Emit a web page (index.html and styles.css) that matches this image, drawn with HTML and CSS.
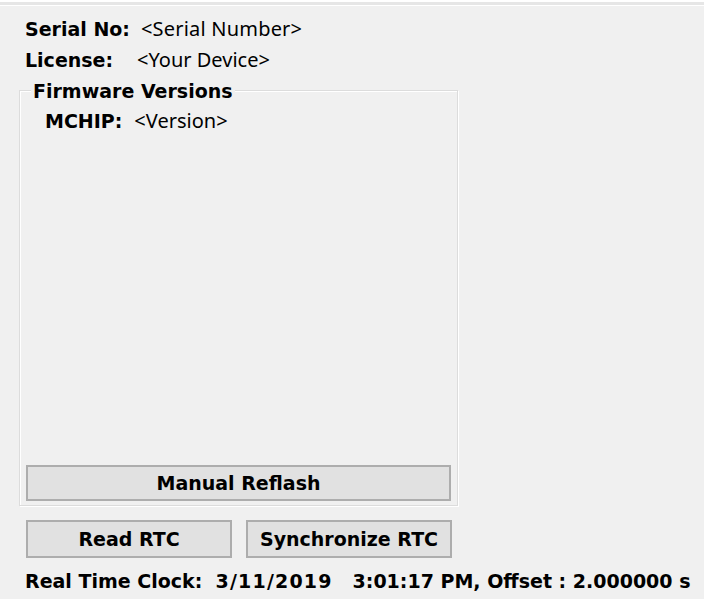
FILE: index.html
```html
<!DOCTYPE html>
<html>
<head>
<meta charset="utf-8">
<link rel="stylesheet" href="styles.css">
</head>
<body>
<div class="window">
  <div class="topbar"></div>
  <div class="content">
    <div class="row"><span class="label">Serial No:</span><span class="value serial">&lt;Serial Number&gt;</span></div>
    <div class="row"><span class="label">License:</span><span class="value license">&lt;Your Device&gt;</span></div>
    <div class="group">
      <div class="group-title">Firmware Versions</div>
      <div class="row sub"><span class="label">MCHIP:</span><span class="value mchip">&lt;Version&gt;</span></div>
      <div class="spacer"></div>
      <div class="btn wide">Manual Reflash</div>
    </div>
    <div class="btnrow">
      <div class="btn half">Read RTC</div>
      <div class="btn half">Synchronize RTC</div>
    </div>
    <div class="status">Real Time Clock:&nbsp; <span class="date">3/11/2019</span> &nbsp; 3:01:17 PM, Offset : 2.000000 s</div>
  </div>
</div>
</body>
</html>
```
FILE: styles.css
```css
html, body {
  margin: 0;
  padding: 0;
  background: #f0f0f0;
}
.window {
  width: 704px;
  height: 599px;
  display: flex;
  flex-direction: column;
}
.topbar {
  height: 3px;
  border-top: 2px solid #ffffff;
  border-bottom: 1px solid #ffffff;
  background: #e6e6e6;
}
.content {
  padding: 7px 0 0 25px;
  font-family: "DejaVu Sans", sans-serif;
  font-size: 19px;
  color: #000;
  display: flex;
  flex-direction: column;
}
.row {
  height: 31px;
  display: flex;
  align-items: center;
}
.label {
  font-weight: bold;
}
.value {
  font-family: "Noto Sans", "DejaVu Sans", sans-serif;
  font-size: 20px;
}
.serial { margin-left: 11px; letter-spacing: 0.2px; }
.license { margin-left: 24px; }
.mchip { margin-left: 12px; }
.group {
  box-sizing: border-box;
  margin-left: -6px;
  margin-top: 15px;
  width: 439px;
  height: 416px;
  border: 1px solid #dcdcdc;
  box-shadow: inset 1px 1px 0 #ffffff, 1px 1px 0 #ffffff;
  display: flex;
  flex-direction: column;
  padding: 0 6px 4px 6px;
}
.group-title {
  align-self: flex-start;
  margin-top: -11px;
  margin-left: 5px;
  padding: 0 2px;
  background: #f0f0f0;
  font-weight: bold;
  line-height: 22px;
}
.sub {
  margin-left: 19px;
  margin-top: 3px;
}
.spacer { flex: 1; }
.btn {
  box-sizing: border-box;
  background: #e1e1e1;
  border: 2px solid #adadad;
  font-weight: bold;
  display: flex;
  align-items: center;
  justify-content: center;
}
.wide {
  height: 36px;
}
.btnrow {
  display: flex;
  gap: 14px;
  margin-top: 14px;
  margin-left: 1px;
}
.half {
  width: 206px;
  height: 38px;
}
.status {
  font-weight: bold;
  margin-top: 8px;
  line-height: 30px;
}
.date {
  letter-spacing: 1.2px;
}
```
